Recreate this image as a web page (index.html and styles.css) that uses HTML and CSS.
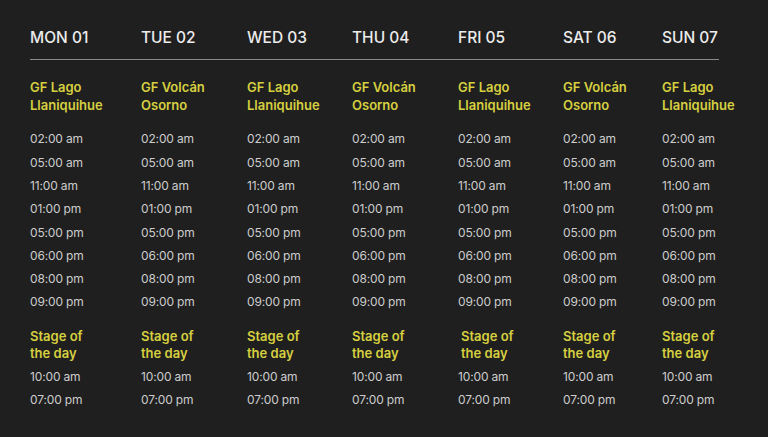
FILE: index.html
```html
<!DOCTYPE html>
<html lang="es">
<head>
<meta charset="utf-8">
<title>Schedule</title>
<link rel="stylesheet" href="styles.css">
</head>
<body>
<div class="schedule">
  <div class="days">
    <div class="day">MON 01</div>
    <div class="day">TUE 02</div>
    <div class="day">WED 03</div>
    <div class="day">THU 04</div>
    <div class="day">FRI 05</div>
    <div class="day">SAT 06</div>
    <div class="day">SUN 07</div>
  </div>
  <div class="cols">
    <div class="col">
      <div class="venue">GF Lago<br>Llaniquihue</div>
      <ul class="times"><li>02:00 am</li><li>05:00 am</li><li>11:00 am</li><li>01:00 pm</li><li>05:00 pm</li><li>06:00 pm</li><li>08:00 pm</li><li>09:00 pm</li></ul>
      <div class="venue stage">Stage of<br>the day</div>
      <ul class="times short"><li>10:00 am</li><li>07:00 pm</li></ul>
    </div>
    <div class="col">
      <div class="venue">GF Volcán<br>Osorno</div>
      <ul class="times"><li>02:00 am</li><li>05:00 am</li><li>11:00 am</li><li>01:00 pm</li><li>05:00 pm</li><li>06:00 pm</li><li>08:00 pm</li><li>09:00 pm</li></ul>
      <div class="venue stage">Stage of<br>the day</div>
      <ul class="times short"><li>10:00 am</li><li>07:00 pm</li></ul>
    </div>
    <div class="col">
      <div class="venue">GF Lago<br>Llaniquihue</div>
      <ul class="times"><li>02:00 am</li><li>05:00 am</li><li>11:00 am</li><li>01:00 pm</li><li>05:00 pm</li><li>06:00 pm</li><li>08:00 pm</li><li>09:00 pm</li></ul>
      <div class="venue stage">Stage of<br>the day</div>
      <ul class="times short"><li>10:00 am</li><li>07:00 pm</li></ul>
    </div>
    <div class="col">
      <div class="venue">GF Volcán<br>Osorno</div>
      <ul class="times"><li>02:00 am</li><li>05:00 am</li><li>11:00 am</li><li>01:00 pm</li><li>05:00 pm</li><li>06:00 pm</li><li>08:00 pm</li><li>09:00 pm</li></ul>
      <div class="venue stage">Stage of<br>the day</div>
      <ul class="times short"><li>10:00 am</li><li>07:00 pm</li></ul>
    </div>
    <div class="col">
      <div class="venue">GF Lago<br>Llaniquihue</div>
      <ul class="times"><li>02:00 am</li><li>05:00 am</li><li>11:00 am</li><li>01:00 pm</li><li>05:00 pm</li><li>06:00 pm</li><li>08:00 pm</li><li>09:00 pm</li></ul>
      <div class="venue stage stage-indent">Stage of<br>the day</div>
      <ul class="times short"><li>10:00 am</li><li>07:00 pm</li></ul>
    </div>
    <div class="col">
      <div class="venue">GF Volcán<br>Osorno</div>
      <ul class="times"><li>02:00 am</li><li>05:00 am</li><li>11:00 am</li><li>01:00 pm</li><li>05:00 pm</li><li>06:00 pm</li><li>08:00 pm</li><li>09:00 pm</li></ul>
      <div class="venue stage">Stage of<br>the day</div>
      <ul class="times short"><li>10:00 am</li><li>07:00 pm</li></ul>
    </div>
    <div class="col">
      <div class="venue">GF Lago<br>Llaniquihue</div>
      <ul class="times"><li>02:00 am</li><li>05:00 am</li><li>11:00 am</li><li>01:00 pm</li><li>05:00 pm</li><li>06:00 pm</li><li>08:00 pm</li><li>09:00 pm</li></ul>
      <div class="venue stage">Stage of<br>the day</div>
      <ul class="times short"><li>10:00 am</li><li>07:00 pm</li></ul>
    </div>
  </div>
</div>
</body>
</html>
```

FILE: styles.css
```css
html, body {
  margin: 0;
  padding: 0;
  background: #1f1f1f;
  height: 100%;
}
body {
  font-family: "Inter", "Liberation Sans", sans-serif;
  color: #e6e6e6;
  overflow: hidden;
}
.schedule {
  padding: 28px 0 0 30px;
  width: 689px;
}
.days, .cols {
  display: grid;
  grid-template-columns: 111px 106px 105px 106px 105px 99px 57px;
}
.days {
  border-bottom: 1px solid #8a8a8a;
  padding-bottom: 11px;
}
.day {
  font-size: 15.5px;
  line-height: 20px;
  font-weight: 500;
  color: #ececec;
  white-space: nowrap;
}
.col {
  display: flex;
  flex-direction: column;
  white-space: nowrap;
}
.venue {
  margin-top: 19px;
  font-size: 13px;
  line-height: 17.7px;
  font-weight: 600;
  color: #d6d040;
}
.stage {
  margin-top: 14px;
}
.stage-indent {
  padding-left: 3px;
}
.times {
  list-style: none;
  margin: 13px 0 0;
  padding: 0;
  font-size: 12px;
  line-height: 23.3px;
  letter-spacing: -0.15px;
  color: #cdcdcd;
}
.times.short {
  margin-top: 2px;
}
```
